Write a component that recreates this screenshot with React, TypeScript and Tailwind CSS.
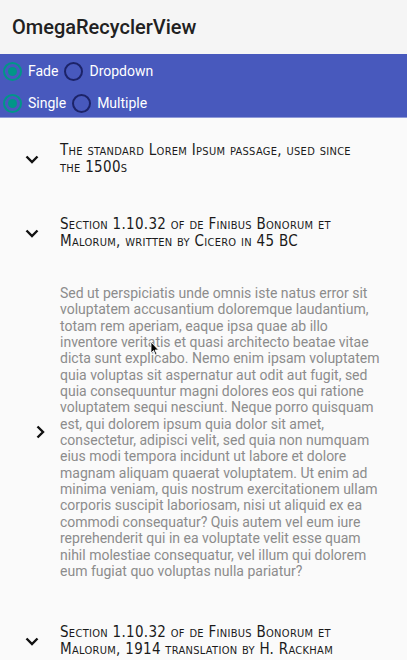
import React from 'react'

const body =
	'Sed ut perspiciatis unde omnis iste natus error sit voluptatem accusantium doloremque laudantium, totam rem aperiam, eaque ipsa quae ab illo inventore veritatis et quasi architecto beatae vitae dicta sunt explicabo. Nemo enim ipsam voluptatem quia voluptas sit aspernatur aut odit aut fugit, sed quia consequuntur magni dolores eos qui ratione voluptatem sequi nesciunt. Neque porro quisquam est, qui dolorem ipsum quia dolor sit amet, consectetur, adipisci velit, sed quia non numquam eius modi tempora incidunt ut labore et dolore magnam aliquam quaerat voluptatem. Ut enim ad minima veniam, quis nostrum exercitationem ullam corporis suscipit laboriosam, nisi ut aliquid ex ea commodi consequatur? Quis autem vel eum iure reprehenderit qui in ea voluptate velit esse quam nihil molestiae consequatur, vel illum qui dolorem eum fugiat quo voluptas nulla pariatur?'

function ChevronDown() {
	return (
		<svg width="14" height="9" viewBox="0 0 14 9" className="shrink-0">
			<path d="M1.5 1.5 L7 7 L12.5 1.5" fill="none" stroke="#111" strokeWidth="2.4" />
		</svg>
	)
}

function ChevronRight() {
	return (
		<svg width="9" height="14" viewBox="0 0 9 14">
			<path d="M1.5 1.5 L7 7 L1.5 12.5" fill="none" stroke="#111" strokeWidth="2.4" />
		</svg>
	)
}

function Radio({ label, checked }: { label: string; checked?: boolean }) {
	return (
		<div className="flex items-center gap-[6px] mr-[6px]">
			<div
				className={
					'size-[19px] rounded-full border-2 flex items-center justify-center ' +
					(checked ? 'border-[#009688]' : 'border-[#1c2368]')
				}
			>
				{checked && <div className="size-[9px] rounded-full bg-[#009688]" />}
			</div>
			<span className="text-white text-[14px] leading-5">{label}</span>
		</div>
	)
}

function Header({ title }: { title: string }) {
	return (
		<div className="flex items-center pt-6 pb-4">
			<div className="w-[60px] flex justify-center pl-1">
				<ChevronDown />
			</div>
			<div className="flex-1 pr-[37px] text-[15px] leading-[17px] tracking-[0.3px] text-[#1a1a1a] [font-variant:small-caps] font-['DejaVu_Sans_Condensed',sans-serif]">
				{title}
			</div>
		</div>
	)
}

export default function App() {
	return (
		<div className="w-[407px] h-[660px] overflow-hidden bg-[#fafafa] font-['Roboto',sans-serif] relative">
			<div className="h-[54px] bg-[#f5f5f5] flex items-center px-3">
				<h1 className="text-[20px] font-medium text-[#212121]">OmegaRecyclerView</h1>
			</div>
			<div className="bg-[#4859bd] border-b border-[#8f9ad8] pl-[3px] pt-[7px] pb-[4px] flex flex-col gap-[12px]">
				<div className="flex items-center">
					<Radio label="Fade" checked />
					<Radio label="Dropdown" />
				</div>
				<div className="flex items-center">
					<Radio label="Single" checked />
					<Radio label="Multiple" />
				</div>
			</div>

			<Header title="The standard Lorem Ipsum passage, used since the 1500s" />
			<Header title="Section 1.10.32 of de Finibus Bonorum et Malorum, written by Cicero in 45 BC" />
			<div className="flex items-center pt-[19px] pb-[21px]">
				<div className="w-[60px] flex justify-end pr-[15px]">
					<ChevronRight />
				</div>
				<p className="flex-1 pr-[22px] text-[14px] leading-[16.35px] text-[#8c8c8c]">{body}</p>
			</div>
			<Header title="Section 1.10.32 of de Finibus Bonorum et Malorum, 1914 translation by H. Rackham" />

			<svg className="absolute left-[150px] top-[341px]" width="10" height="15" viewBox="0 0 10 15">
				<path d="M1 1 L1 12 L3.5 9.5 L5.5 14 L7 13.3 L5 9 L8.5 9 Z" fill="#000" stroke="#fff" strokeWidth="0.8" />
			</svg>
		</div>
	)
}
